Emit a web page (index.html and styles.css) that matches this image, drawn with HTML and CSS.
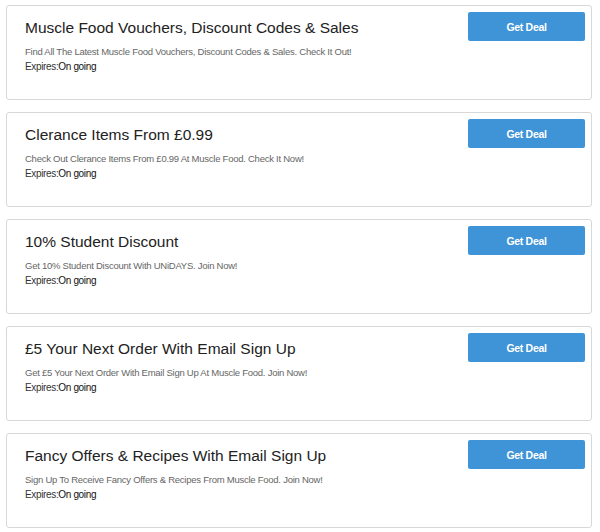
FILE: index.html
```html
<!DOCTYPE html>
<html lang="en">
<head>
    <meta charset="UTF-8">
    <meta name="viewport" content="width=device-width, initial-scale=1.0">
    <title>Muscle Food Deals</title>
    <link rel="stylesheet" href="styles.css">
</head>
<body>
    <div class="deals">
        <!-- Deal 1 -->
        <div class="deal">
            <div class="deal-info">
                <h2>Muscle Food Vouchers, Discount Codes &amp; Sales</h2>
                <p class="desc">Find All The Latest Muscle Food Vouchers, Discount Codes &amp; Sales. Check It Out!</p>
                <p class="expires">Expires:<span>On going</span></p>
            </div>
            <button class="get-deal">Get Deal</button>
        </div>

        <!-- Deal 2 -->
        <div class="deal">
            <div class="deal-info">
                <h2>Clerance Items From £0.99</h2>
                <p class="desc">Check Out Clerance Items From £0.99 At Muscle Food. Check It Now!</p>
                <p class="expires">Expires:<span>On going</span></p>
            </div>
            <button class="get-deal">Get Deal</button>
        </div>

        <!-- Deal 3 -->
        <div class="deal">
            <div class="deal-info">
                <h2>10% Student Discount</h2>
                <p class="desc">Get 10% Student Discount With UNiDAYS. Join Now!</p>
                <p class="expires">Expires:<span>On going</span></p>
            </div>
            <button class="get-deal">Get Deal</button>
        </div>

        <!-- Deal 4 -->
        <div class="deal">
            <div class="deal-info">
                <h2>£5 Your Next Order With Email Sign Up</h2>
                <p class="desc">Get £5 Your Next Order With Email Sign Up At Muscle Food. Join Now!</p>
                <p class="expires">Expires:<span>On going</span></p>
            </div>
            <button class="get-deal">Get Deal</button>
        </div>

        <!-- Deal 5 -->
        <div class="deal">
            <div class="deal-info">
                <h2>Fancy Offers &amp; Recipes With Email Sign Up</h2>
                <p class="desc">Sign Up To Receive Fancy Offers &amp; Recipes From Muscle Food. Join Now!</p>
                <p class="expires">Expires:<span>On going</span></p>
            </div>
            <button class="get-deal">Get Deal</button>
        </div>
    </div>
</body>
</html>
```

FILE: styles.css
```css
body {
    font-family: 'Liberation Sans', Arial, sans-serif;
    margin: 0;
    padding: 0;
    background: #fff;
    color: #222;
}
.deals {
    display: flex;
    flex-direction: column;
    gap: 12px;
    padding: 5px 8px 0 6px;
}
.deal {
    display: flex;
    justify-content: space-between;
    align-items: flex-start;
    height: 95px;
    box-sizing: border-box;
    border: 1px solid #d8d8d8;
    border-radius: 3px;
    padding: 6px 6px 0 18px;
    background: #fff;
}
.deal-info {
    padding-top: 6px;
}
.deal h2 {
    margin: 0 0 7px 0;
    font-size: 15.5px;
    line-height: 20px;
    font-weight: normal;
    color: #222;
}
.desc {
    margin: 0;
    font-size: 9.5px;
    line-height: 14px;
    letter-spacing: -0.25px;
    color: #666;
}
.expires {
    margin: 0;
    font-size: 10px;
    line-height: 16px;
    letter-spacing: -0.35px;
    color: #333;
}
.expires span {
    color: #111;
}
.get-deal {
    width: 117px;
    height: 29px;
    flex-shrink: 0;
    background: #3f94d8;
    color: #fff;
    border: none;
    border-radius: 2px;
    font-family: inherit;
    font-size: 10.5px;
    font-weight: bold;
    letter-spacing: -0.3px;
    cursor: pointer;
}
```
